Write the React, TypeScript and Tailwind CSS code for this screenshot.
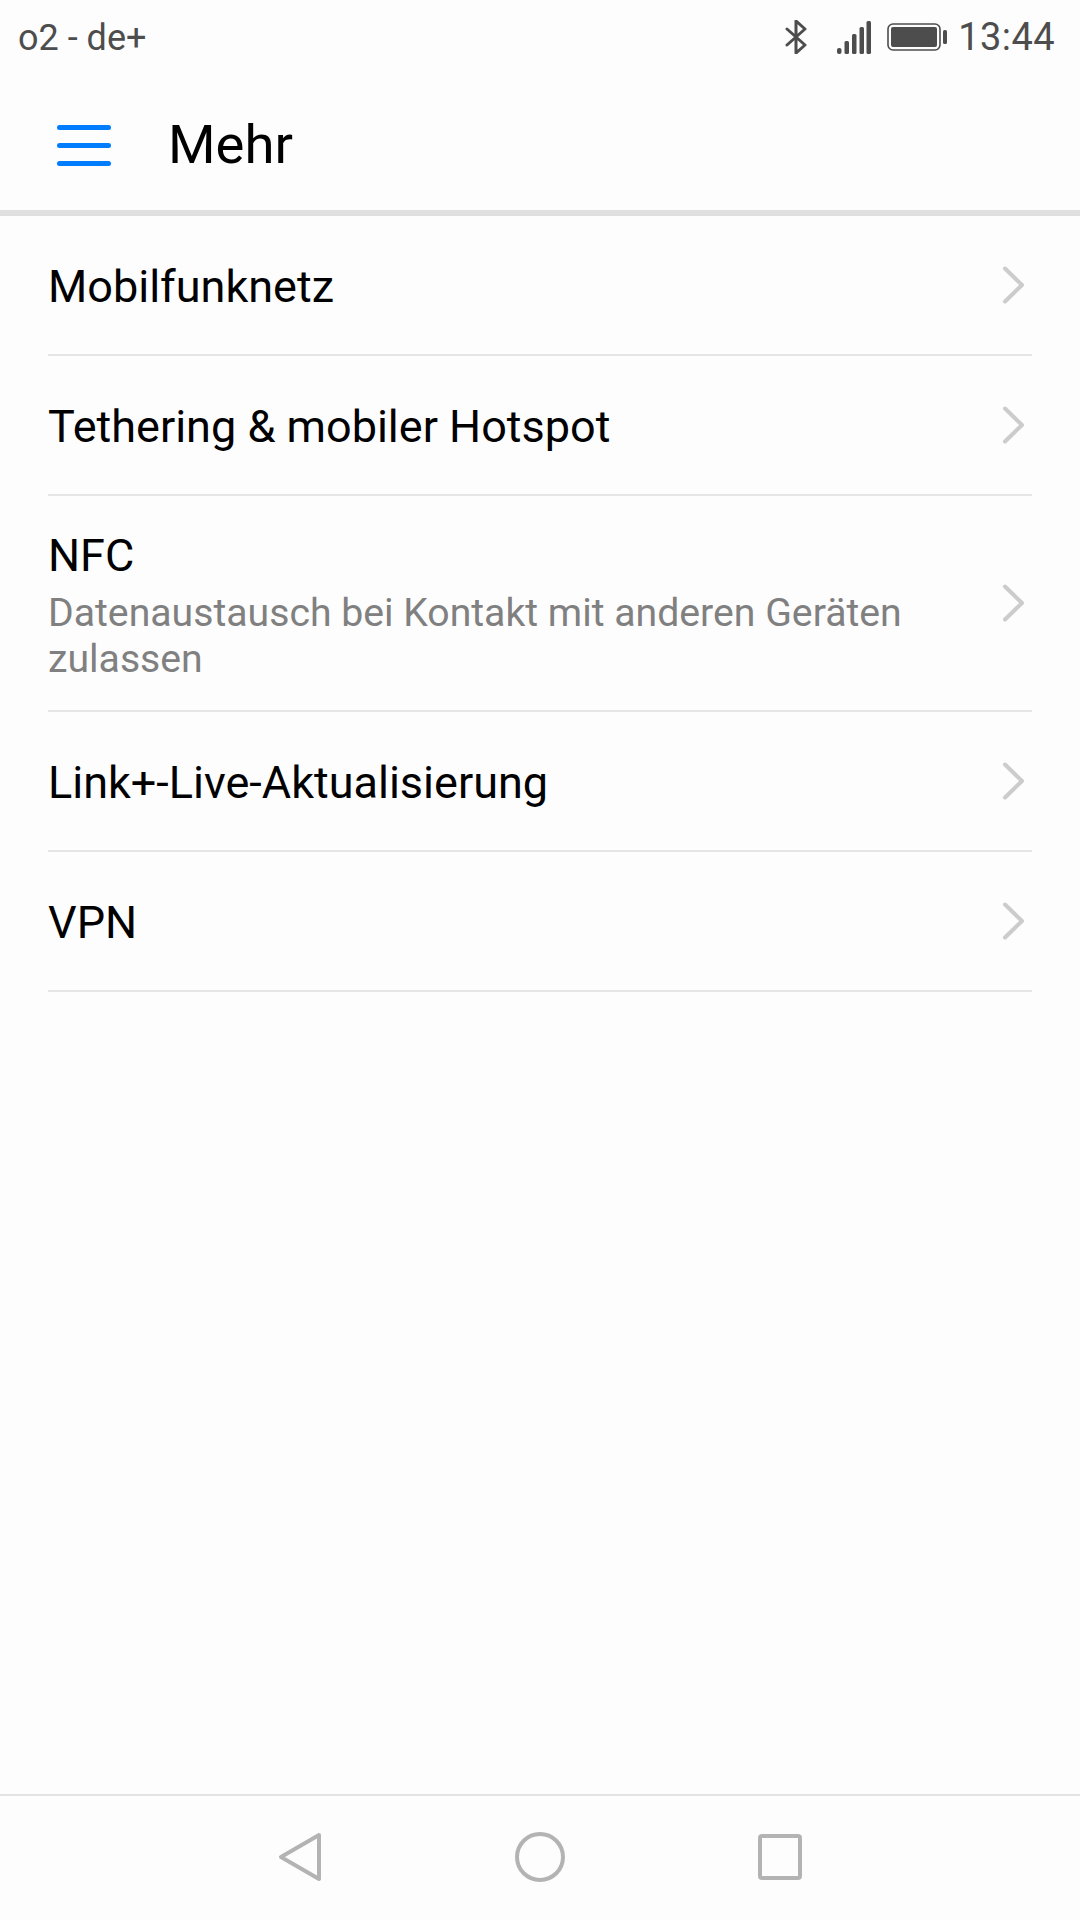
type RowProps = {
  title: string;
  sub?: string;
};

const Row = ({ title, sub }: RowProps) => {
  return (
    <div className={`flex items-center border-b-2 border-[#e6e6e6] ${sub ? "h-[216px]" : "h-[140px]"}`}>
      <div className={`flex-1 min-w-0 ${sub ? "pb-[2px]" : ""}`}>
        <div className={`text-[45px] text-black ${sub ? "leading-[68px]" : "leading-[56px] pt-[3px]"}`}>{title}</div>
        {sub && <div className="text-[39.2px] leading-[46.5px] w-[900px] text-[#808080]">{sub}</div>}
      </div>
      <svg width="24" height="38" viewBox="0 0 24 38" fill="none" className="mr-[6px] shrink-0">
        <path d="M3 2.5 L20 19 L3 35.5" stroke="#cccccc" strokeWidth="4" strokeLinecap="round" strokeLinejoin="round" />
      </svg>
    </div>
  );
};

const StatusBar = () => {
  return (
    <div className="h-[74px] flex items-center justify-between pl-[18px] pr-[25px] text-[#4d4d4d]">
      <span className="text-[36px] pt-[1px]">o2 - de+</span>
      <div className="flex items-center">
        <svg width="22" height="34" viewBox="0 0 22 34" fill="none" className="mr-[30px]">
          <path d="M2 9 L20 25 L11 33 V1 L20 9 L2 25" stroke="#4d4d4d" strokeWidth="3" strokeLinecap="round" strokeLinejoin="round" />
        </svg>
        <svg width="34" height="33" viewBox="0 0 34 33" className="mr-[16px]">
          <rect x="0" y="27" width="4.5" height="6" rx="2" fill="#4d4d4d" />
          <rect x="7.5" y="20" width="4.5" height="13" rx="1.5" fill="#4d4d4d" />
          <rect x="15" y="13" width="4.5" height="20" rx="1.5" fill="#4d4d4d" />
          <rect x="22.5" y="6" width="4.5" height="27" rx="1.5" fill="#4d4d4d" />
          <rect x="29.5" y="0" width="4.5" height="33" rx="1.5" fill="#4d4d4d" />
        </svg>
        <svg width="60" height="28" viewBox="0 0 60 28" className="mr-[11px]">
          <rect x="1" y="1" width="52" height="26" rx="5" fill="none" stroke="#4d4d4d" strokeWidth="1.6" />
          <rect x="4" y="4" width="46" height="20" rx="2" fill="#4d4d4d" />
          <rect x="56" y="7" width="4" height="14" rx="1.5" fill="#4d4d4d" />
        </svg>
        <span className="text-[38px] tracking-[0.4px] pt-[1px]">13:44</span>
      </div>
    </div>
  );
};

export default function App() {
  return (
    <div className="w-[1080px] h-[1920px] bg-[#fdfdfd] flex flex-col font-['Roboto',sans-serif]">
      <StatusBar />
      <div className="h-[142px] flex items-center pl-[57px] pt-[6px] border-b-[6px] border-[#e0e0e0]">
        <div className="w-[54px] flex flex-col gap-[13px]">
          <div className="h-[5px] rounded-full bg-[#007dff]" />
          <div className="h-[5px] rounded-full bg-[#007dff]" />
          <div className="h-[5px] rounded-full bg-[#007dff]" />
        </div>
        <span className="ml-[57px] text-[54.5px] text-black">Mehr</span>
      </div>

      <div className="flex-1 px-[48px]">
        <Row title="Mobilfunknetz" />
        <Row title="Tethering & mobiler Hotspot" />
        <Row title="NFC" sub="Datenaustausch bei Kontakt mit anderen Geräten zulassen" />
        <Row title="Link+-Live-Aktualisierung" />
        <Row title="VPN" />
      </div>

      <div className="h-[126px] border-t-2 border-[#e3e3e3] flex items-center justify-center gap-[193px] pb-[2px]">
        <svg width="44" height="50" viewBox="0 0 44 50" fill="none">
          <path d="M41 3 L3 25 L41 47 Z" stroke="#b3b3b3" strokeWidth="4" strokeLinejoin="round" />
        </svg>
        <svg width="50" height="50" viewBox="0 0 50 50" fill="none">
          <circle cx="25" cy="25" r="23" stroke="#b3b3b3" strokeWidth="4" />
        </svg>
        <svg width="44" height="46" viewBox="0 0 44 46" fill="none">
          <rect x="2" y="2" width="40" height="42" rx="2" stroke="#b3b3b3" strokeWidth="4" />
        </svg>
      </div>
    </div>
  );
}
